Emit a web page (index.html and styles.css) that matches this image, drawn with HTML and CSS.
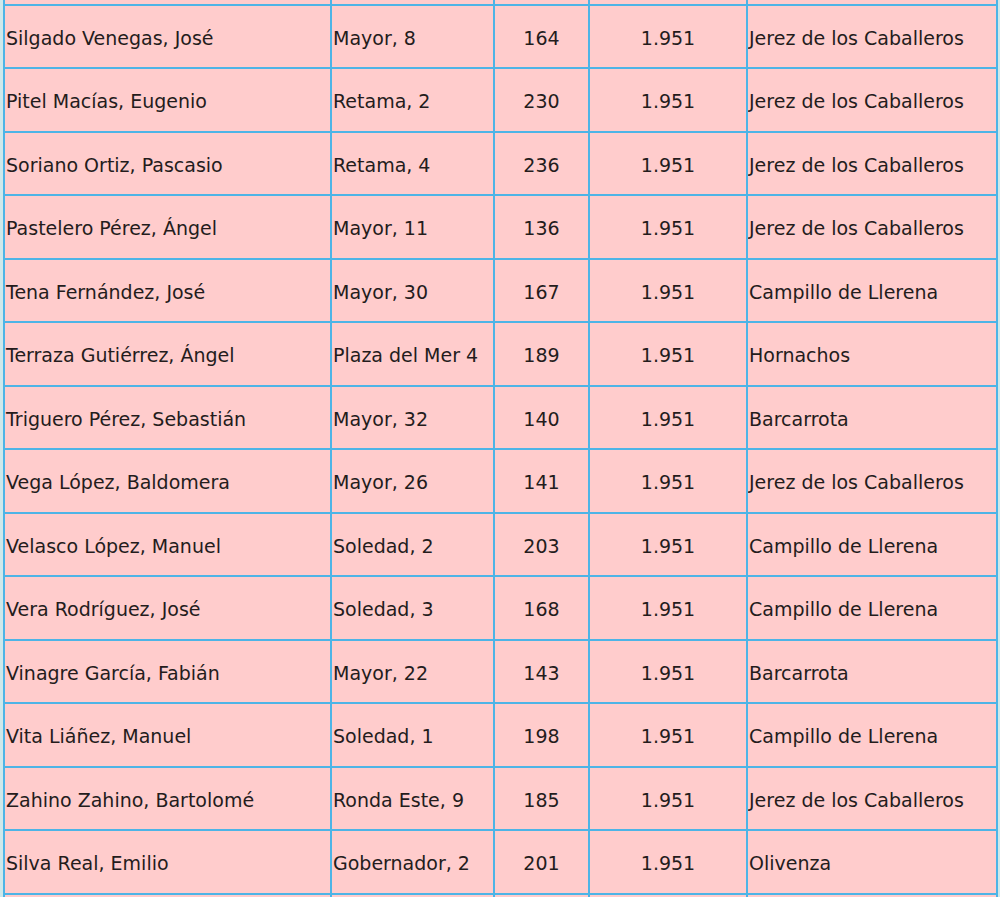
FILE: index.html
```html
<!DOCTYPE html>
<html lang="es">
<head>
<meta charset="utf-8">
<title>Listado</title>
<link rel="stylesheet" href="styles.css">
</head>
<body>
<table class="grid">
  <colgroup>
    <col class="c-name"><col class="c-addr"><col class="c-num"><col class="c-year"><col class="c-town">
  </colgroup>
  <tbody>
    <tr class="cut"><td></td><td></td><td></td><td></td><td></td></tr>
    <tr><td>Silgado Venegas, José</td><td>Mayor, 8</td><td class="ctr">164</td><td class="ctr">1.951</td><td>Jerez de los Caballeros</td></tr>
    <tr><td>Pitel Macías, Eugenio</td><td>Retama, 2</td><td class="ctr">230</td><td class="ctr">1.951</td><td>Jerez de los Caballeros</td></tr>
    <tr><td>Soriano Ortiz, Pascasio</td><td>Retama, 4</td><td class="ctr">236</td><td class="ctr">1.951</td><td>Jerez de los Caballeros</td></tr>
    <tr><td>Pastelero Pérez, Ángel</td><td>Mayor, 11</td><td class="ctr">136</td><td class="ctr">1.951</td><td>Jerez de los Caballeros</td></tr>
    <tr><td>Tena Fernández, José</td><td>Mayor, 30</td><td class="ctr">167</td><td class="ctr">1.951</td><td>Campillo de Llerena</td></tr>
    <tr><td>Terraza Gutiérrez, Ángel</td><td>Plaza del Mer 4</td><td class="ctr">189</td><td class="ctr">1.951</td><td>Hornachos</td></tr>
    <tr><td>Triguero Pérez, Sebastián</td><td>Mayor, 32</td><td class="ctr">140</td><td class="ctr">1.951</td><td>Barcarrota</td></tr>
    <tr><td>Vega López, Baldomera</td><td>Mayor, 26</td><td class="ctr">141</td><td class="ctr">1.951</td><td>Jerez de los Caballeros</td></tr>
    <tr><td>Velasco López, Manuel</td><td>Soledad, 2</td><td class="ctr">203</td><td class="ctr">1.951</td><td>Campillo de Llerena</td></tr>
    <tr><td>Vera Rodríguez, José</td><td>Soledad, 3</td><td class="ctr">168</td><td class="ctr">1.951</td><td>Campillo de Llerena</td></tr>
    <tr><td>Vinagre García, Fabián</td><td>Mayor, 22</td><td class="ctr">143</td><td class="ctr">1.951</td><td>Barcarrota</td></tr>
    <tr><td>Vita Liáñez, Manuel</td><td>Soledad, 1</td><td class="ctr">198</td><td class="ctr">1.951</td><td>Campillo de Llerena</td></tr>
    <tr><td>Zahino Zahino, Bartolomé</td><td>Ronda Este, 9</td><td class="ctr">185</td><td class="ctr">1.951</td><td>Jerez de los Caballeros</td></tr>
    <tr><td>Silva Real, Emilio</td><td>Gobernador, 2</td><td class="ctr">201</td><td class="ctr">1.951</td><td>Olivenza</td></tr>
    <tr class="cut"><td></td><td></td><td></td><td></td><td></td></tr>
  </tbody>
</table>
</body>
</html>
```

FILE: styles.css
```css
html, body {
  margin: 0;
  padding: 0;
  background: #cfe8ea;
  overflow: hidden;
}

.grid {
  margin: -60px 0 0 3px;
  width: 995px;
  table-layout: fixed;
  border-collapse: separate;
  border-spacing: 2px;
  background: #4db4e6;
  font-family: "DejaVu Sans", sans-serif;
  font-size: 19px;
  color: #241c1c;
}

.c-name { width: 325px; }
.c-addr { width: 161px; }
.c-num { width: 93px; }
.c-year { width: 156px; }
.c-town { width: 248px; }

.grid td {
  background: #ffcccc;
  height: 61.5px;
  padding: 3px 0 0 1px;
  box-sizing: border-box;
  vertical-align: middle;
  white-space: nowrap;
  overflow: hidden;
}

.grid td.ctr {
  text-align: center;
  padding: 3px 0 0 0;
}
```
